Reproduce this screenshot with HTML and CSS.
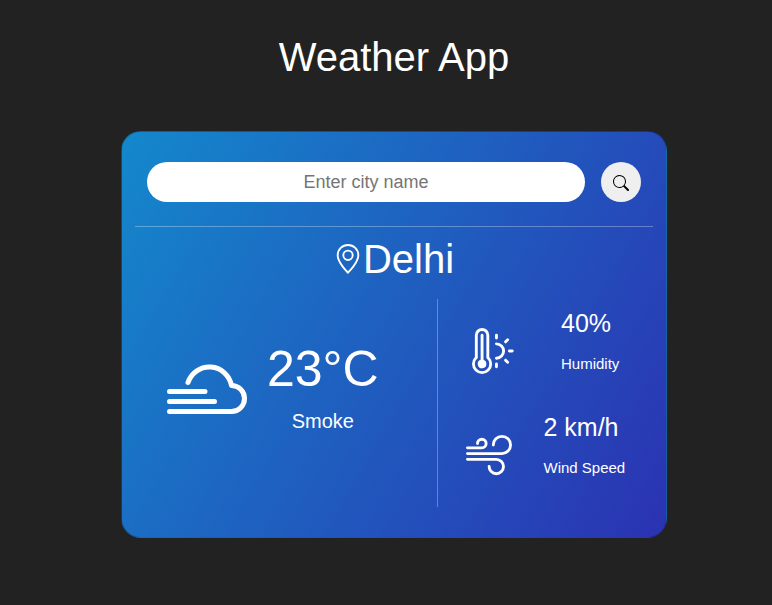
FILE: index.html
```html
<!DOCTYPE html>
<html lang="en">
<head>
<meta charset="utf-8">
<title>Weather App</title>
<link rel="stylesheet" href="styles.css">
</head>
<body>
<h1 class="title">Weather App</h1>
<main class="card">
  <form class="search">
    <input class="search-input" type="text" placeholder="Enter city name" aria-label="City">
    <button class="search-button" type="button" aria-label="Search">
      <svg width="16" height="16" viewBox="0 0 16 16" fill="currentColor"><path d="M11.742 10.344a6.5 6.5 0 1 0-1.397 1.398h-.001q.044.06.098.115l3.85 3.85a1 1 0 0 0 1.415-1.414l-3.85-3.85a1 1 0 0 0-.115-.1zM12 6.5a5.5 5.5 0 1 1-11 0 5.5 5.5 0 0 1 11 0"/></svg>
    </button>
  </form>
  <hr class="divider">
  <h2 class="city">
    <svg width="30" height="30" viewBox="0 0 16 16" fill="currentColor"><path d="M12.166 8.94c-.524 1.062-1.234 2.12-1.96 3.07A32 32 0 0 1 8 14.58a32 32 0 0 1-2.206-2.57c-.726-.95-1.436-2.008-1.96-3.07C3.304 7.867 3 6.862 3 6a5 5 0 0 1 10 0c0 .862-.305 1.867-.834 2.94M8 16s6-5.686 6-10A6 6 0 0 0 2 6c0 4.314 6 10 6 10"/><path d="M8 8a2 2 0 1 1 0-4 2 2 0 0 1 0 4m0 1a3 3 0 1 0 0-6 3 3 0 0 0 0 6"/></svg>
    <span>Delhi</span>
  </h2>
  <div class="weather">
    <section class="current">
      <svg class="cloud" width="80" height="50" viewBox="0 0 80 50" fill="none" stroke="currentColor" stroke-width="5" stroke-linecap="round" stroke-linejoin="round"><path d="M2.5 27.5H38M2.5 37.5H47.5M2.5 47.5H64.5A13 13 0 0 0 64.5 21.5A22.5 22.5 0 0 0 21 18.5"/></svg>
      <div class="reading">
        <div class="temperature">23°C</div>
        <div class="condition">Smoke</div>
      </div>
    </section>
    <section class="details">
      <div class="detail humidity">
        <svg width="46" height="46" viewBox="0 0 16 16" fill="currentColor"><path d="M5 12.5a1.5 1.5 0 1 1-2-1.415V2.5a.5.5 0 0 1 1 0v8.585A1.5 1.5 0 0 1 5 12.5"/><path d="M1 2.5a2.5 2.5 0 0 1 5 0v7.55a3.5 3.5 0 1 1-5 0zM3.5 1A1.5 1.5 0 0 0 2 2.5v7.987l-.167.15a2.5 2.5 0 1 0 3.333 0L5 10.486V2.5A1.5 1.5 0 0 0 3.5 1m5 1a.5.5 0 0 1 .5.5v1a.5.5 0 0 1-1 0v-1a.5.5 0 0 1 .5-.5m4.243 1.757a.5.5 0 0 1 0 .707l-.707.708a.5.5 0 1 1-.708-.708l.708-.707a.5.5 0 0 1 .707 0M8 5.5a.5.5 0 0 1 .5-.5 3 3 0 1 1 0 6 .5.5 0 0 1 0-1 2 2 0 0 0 0-4 .5.5 0 0 1-.5-.5M12.5 8a.5.5 0 0 1 .5-.5h1a.5.5 0 1 1 0 1h-1a.5.5 0 0 1-.5-.5m-1.172 2.828a.5.5 0 0 1 .708 0l.707.708a.5.5 0 0 1-.707.707l-.708-.707a.5.5 0 0 1 0-.708M8.5 12a.5.5 0 0 1 .5.5v1a.5.5 0 0 1-1 0v-1a.5.5 0 0 1 .5-.5"/></svg>
        <div>
          <div class="value">40%</div>
          <div class="label">Humidity</div>
        </div>
      </div>
      <div class="detail wind">
        <svg width="46" height="46" viewBox="0 0 16 16" fill="currentColor"><path d="M12.5 2A2.5 2.5 0 0 0 10 4.5a.5.5 0 0 1-1 0A3.5 3.5 0 1 1 12.5 8H.5a.5.5 0 0 1 0-1h12a2.5 2.5 0 0 0 0-5m-7 1a1 1 0 0 0-1 1 .5.5 0 0 1-1 0 2 2 0 1 1 2 2h-5a.5.5 0 0 1 0-1h5a1 1 0 0 0 0-2M0 9.5A.5.5 0 0 1 .5 9h10.042a3 3 0 1 1-3 3 .5.5 0 0 1 1 0 2 2 0 1 0 2-2H.5a.5.5 0 0 1-.5-.5"/></svg>
        <div>
          <div class="value">2 km/h</div>
          <div class="label">Wind Speed</div>
        </div>
      </div>
    </section>
  </div>
</main>
</body>
</html>
```
FILE: styles.css
```css
* { box-sizing: border-box; }
body {
  margin: 0;
  padding: 33px 0 0 16px;
  background: #222;
  color: #fff;
  font-family: "Liberation Sans", Arial, sans-serif;
}
svg { display: block; flex: none; }
.title {
  margin: 0 0 50px;
  font-size: 40px;
  font-weight: 400;
  line-height: 48px;
  text-align: center;
}
.card {
  width: 546px;
  height: 407px;
  margin: 0 auto;
  padding: 30px 13px 0;
  border: 1px solid rgba(0, 0, 0, 0.175);
  border-radius: 20px;
  background: linear-gradient(120deg, #1488cc, #2b32b2);
}
.search {
  display: flex;
  gap: 16px;
  padding: 0 12px;
}
.search-input {
  flex: 1;
  min-width: 0;
  height: 40px;
  padding: 0;
  border: 0;
  border-radius: 20px;
  background: #fff;
  font: 18px "Liberation Sans", Arial, sans-serif;
  text-align: center;
}
.search-input::placeholder { color: #757575; }
.search-button {
  display: flex;
  align-items: center;
  justify-content: center;
  width: 40px;
  height: 40px;
  padding: 2px 0 0;
  border: 0;
  border-radius: 50%;
  background: #efefef;
  color: #000;
}
.divider {
  height: 1px;
  margin: 24px 0 8px;
  border: 0;
  background: rgba(255, 255, 255, 0.3);
}
.city {
  display: flex;
  align-items: center;
  justify-content: center;
  margin: 0;
  padding-right: 1px;
  font-size: 40px;
  font-weight: 400;
  line-height: 48px;
}
.weather {
  display: flex;
  height: 208px;
  margin-top: 16px;
}
.current {
  display: flex;
  width: 303px;
  padding: 40px 0 0 32px;
  border-right: 1px solid rgba(255, 255, 255, 0.3);
}
.cloud { margin-top: 25px; }
.reading {
  margin-left: 20px;
  text-align: center;
}
.temperature {
  font-size: 50px;
  line-height: 60px;
}
.condition {
  margin-top: 7px;
  font-size: 20px;
  line-height: 30px;
}
.detail {
  display: flex;
  height: 104px;
  padding-top: 9px;
}
.detail svg { margin-top: 20px; }
.humidity { padding-left: 34px; gap: 43px; }
.wind { padding-left: 28px; gap: 31.5px; }
.value {
  font-size: 25px;
  line-height: 30px;
}
.label {
  margin-top: 15px;
  font-size: 15px;
  line-height: 22px;
}
```
